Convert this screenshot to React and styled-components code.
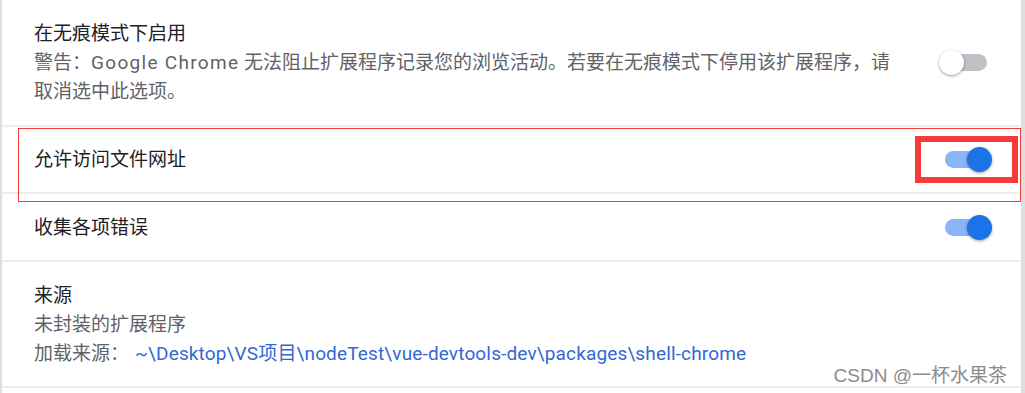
import React from 'react'
import styled, { createGlobalStyle } from 'styled-components'

const GlobalStyle = createGlobalStyle`
  html, body {
    margin: 0;
    padding: 0;
    background: #dedede;
  }
  body {
    font-family: Roboto, "Noto Sans CJK SC", "Noto Sans", sans-serif;
    font-size: 19px;
    -webkit-font-smoothing: antialiased;
  }
`

const Page = styled.div`
  position: relative;
  width: 1025px;
  height: 393px;
  overflow: hidden;
`

const Card = styled.div`
  margin-left: 2px;
  width: 1019px;
  height: 393px;
  background: #fff;
`

const Row = styled.div`
  position: relative;
  display: flex;
  align-items: center;
  justify-content: space-between;
  box-sizing: border-box;
  min-height: ${({ h }) => h}px;
  padding: 0 34px 0 32px;
  border-bottom: 2px solid #eeeeee;
`

const Text = styled.div`
  flex: 0 1 872px;
  line-height: 29px;
`

const Title = styled.div`
  color: #202124;
`

const Secondary = styled.div`
  color: #5f6368;
`

const Brand = styled.span`
  letter-spacing: 1.3px;
`

const Link = styled.a`
  margin-left: 6px;
  color: #3367d6;
  text-decoration: none;
  letter-spacing: 0.15px;
`

const Track = styled.div`
  position: relative;
  flex: none;
  width: 42px;
  height: 17px;
  border-radius: 9px;
  background: ${({ on }) => (on ? '#8ab4f8' : '#bdc1c6')};
`

const Knob = styled.div`
  position: absolute;
  top: -4px;
  left: ${({ on }) => (on ? '22px' : '-6px')};
  width: 25px;
  height: 25px;
  border-radius: 50%;
  background: ${({ on }) => (on ? '#1a73e8' : '#ffffff')};
  box-shadow: 0 1px 3px rgba(0, 0, 0, 0.4);
`

const ThinMark = styled.div`
  position: absolute;
  left: 16px;
  top: 1px;
  width: 1003px;
  height: 74px;
  box-sizing: border-box;
  border: 1px solid #f53a3a;
  pointer-events: none;
`

const ThickMark = styled.div`
  position: absolute;
  left: 913px;
  top: 9px;
  width: 103px;
  height: 47px;
  box-sizing: border-box;
  border: 6px solid #f53a3a;
  pointer-events: none;
`

const Watermark = styled.div`
  position: absolute;
  right: 18px;
  bottom: 6px;
  font-family: "Liberation Sans", "Noto Sans CJK SC", sans-serif;
  font-size: 19px;
  color: #8c8c8c;
  text-shadow: 0 0 1px rgba(255, 255, 255, 0.9);
  white-space: nowrap;
`

const Toggle = ({ on }) => (
  <Track on={on}>
    <Knob on={on} />
  </Track>
)

export default function App() {
  return (
    <Page>
      <GlobalStyle />
      <Card>
        <Row h={127}>
          <Text>
            <Title>在无痕模式下启用</Title>
            <Secondary>
              警告：<Brand>Google Chrome</Brand> 无法阻止扩展程序记录您的浏览活动。若要在无痕模式下停用该扩展程序，请取消选中此选项。
            </Secondary>
          </Text>
          <Toggle on={false} />
        </Row>
        <Row h={67}>
          <Text>
            <Title>允许访问文件网址</Title>
          </Text>
          <Toggle on />
          <ThinMark />
          <ThickMark />
        </Row>
        <Row h={68}>
          <Text>
            <Title>收集各项错误</Title>
          </Text>
          <Toggle on />
        </Row>
        <Row h={126}>
          <Text>
            <Title>来源</Title>
            <Secondary>未封装的扩展程序</Secondary>
            <Secondary>
              加载来源：
              <Link href="#">~\Desktop\VS项目\nodeTest\vue-devtools-dev\packages\shell-chrome</Link>
            </Secondary>
          </Text>
        </Row>
      </Card>
      <Watermark>CSDN @一杯水果茶</Watermark>
    </Page>
  )
}
